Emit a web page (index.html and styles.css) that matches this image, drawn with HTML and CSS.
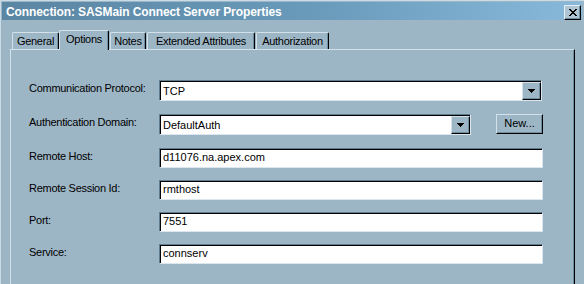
FILE: index.html
```html
<!DOCTYPE html>
<html lang="en">
  <head>
    <meta charset="UTF-8" />
    <title>Connection: SASMain Connect Server Properties</title>
    <link rel="stylesheet" href="styles.css">
  </head>
  <body>
    <div class="window">
      <div class="titlebar">
        <span class="title">Connection: SASMain Connect Server Properties</span>
        <div class="close">
          <svg width="8" height="7" viewBox="0 0 8 7" shape-rendering="crispEdges">
            <path d="M0 0h2v1h1v1h2v-1h1v-1h2v1h-1v1h-1v1h-1v1h1v1h1v1h1v1h-2v-1h-1v-1h-2v1h-1v1h-2v-1h1v-1h1v-1h1v-1h-1v-1h-1v-1h-1z" fill="#000"/>
          </svg>
        </div>
      </div>

      <div class="tabs">
        <div class="tab general">General</div>
        <div class="tab options active">Options</div>
        <div class="tab notes">Notes</div>
        <div class="tab extended">Extended Attributes</div>
        <div class="tab authorization">Authorization</div>
      </div>

      <div class="panel">
        <div class="form">
          <div class="label">Communication Protocol:</div>
          <div class="combo wide">
            <span class="value">TCP</span>
            <span class="drop"><svg width="7" height="4" viewBox="0 0 7 4" shape-rendering="crispEdges"><path d="M0 0h7v1h-1v1h-1v1h-1v1h-1v-1h-1v-1h-1v-1h-1z" fill="#000"/></svg></span>
          </div>

          <div class="label">Authentication Domain:</div>
          <div class="combo-row">
            <div class="combo short">
              <span class="value">DefaultAuth</span>
              <span class="drop"><svg width="7" height="4" viewBox="0 0 7 4" shape-rendering="crispEdges"><path d="M0 0h7v1h-1v1h-1v1h-1v1h-1v-1h-1v-1h-1v-1h-1z" fill="#000"/></svg></span>
            </div>
            <div class="button">New...</div>
          </div>

          <div class="label">Remote Host:</div>
          <div class="field">d11076.na.apex.com</div>

          <div class="label">Remote Session Id:</div>
          <div class="field">rmthost</div>

          <div class="label">Port:</div>
          <div class="field">7551</div>

          <div class="label">Service:</div>
          <div class="field">connserv</div>
        </div>
      </div>
    </div>
  </body>
</html>
```

FILE: styles.css
```css
* {
  box-sizing: border-box;
}
body {
  margin: 0;
  background: #9db6c6;
  font-family: "Liberation Sans", Arial, sans-serif;
  font-size: 11px;
  color: #000;
}
.window {
  width: 584px;
  height: 284px;
  overflow: hidden;
  border-top: 1px solid #c9dbe6;
  border-left: 1px solid #c9dbe6;
  padding: 1px 2px 0 1px;
}
.titlebar {
  height: 18px;
  display: flex;
  align-items: flex-start;
  justify-content: space-between;
  background: linear-gradient(to right, #5b86a3, #6a9bbb 55%, #89b9da);
  padding-left: 4px;
}
.title {
  color: #fff;
  font-weight: bold;
  font-size: 12px;
  letter-spacing: -0.1px;
  line-height: 18px;
  padding-top: 1px;
}
.close {
  width: 17px;
  height: 15px;
  margin-top: 3px;
  margin-right: 1px;
  background: #aec5d3;
  border-top: 1px solid #e4eef4;
  border-left: 1px solid #e4eef4;
  border-right: 1px solid #000;
  border-bottom: 1px solid #000;
  box-shadow: inset -1px -1px 0 #6f8ea1;
  display: flex;
  align-items: center;
  justify-content: center;
}
.close svg {
  display: block;
}
.tabs {
  display: flex;
  align-items: flex-end;
  height: 19px;
  margin-top: 10px;
  padding-left: 10px;
}
.tab {
  height: 17px;
  line-height: 16px;
  text-align: center;
  letter-spacing: -0.28px;
  border-top: 1px solid #d2e1ea;
  border-left: 1px solid #d2e1ea;
  border-right: 1px solid #000;
  border-top-left-radius: 2px;
  border-top-right-radius: 2px;
  box-shadow: inset -1px 0 0 #6f8ea1;
  white-space: nowrap;
}
.tab.active {
  height: 20px;
  line-height: 17px;
  margin-bottom: -1px;
  background: #9db6c6;
  position: relative;
  z-index: 1;
}
.general { width: 47px; }
.options { width: 50px; }
.notes { width: 36px; margin-left: 1px; }
.extended { width: 108px; margin-left: 1px; }
.authorization { width: 73px; margin-left: 1px; }
.panel {
  width: 565px;
  height: 240px;
  margin-left: 8px;
  border-top: 1px solid #d2e1ea;
  border-left: 1px solid #d2e1ea;
  border-right: 1px solid #000;
  box-shadow: inset -1px 0 0 #6f8ea1;
  padding: 30px 0 0 18px;
}
.form {
  display: grid;
  grid-template-columns: 130px auto;
  grid-template-rows: 34px 34px 32px 32px 32px 32px;
  align-items: start;
}
.label {
  line-height: 14px;
  padding-top: 1px;
  letter-spacing: -0.28px;
  white-space: nowrap;
}
.combo,
.field {
  background: #fff;
  border-top: 1px solid #5e7c90;
  border-left: 1px solid #5e7c90;
  border-bottom: 1px solid #dae7ef;
  border-right: 1px solid #dae7ef;
  box-shadow: inset 1px 1px 0 #000;
}
.combo {
  height: 21px;
  display: flex;
  padding: 1px 0 0 1px;
}
.combo.wide {
  width: 383px;
}
.combo.short {
  width: 312px;
}
.value {
  flex: 1;
  padding: 1px 0 0 2px;
  line-height: 17px;
}
.drop {
  width: 19px;
  height: 18px;
  background: #9db6c6;
  border-top: 1px solid #d2e1ea;
  border-left: 1px solid #d2e1ea;
  border-right: 1px solid #000;
  border-bottom: 1px solid #000;
  box-shadow: inset -1px -1px 0 #6f8ea1;
  display: flex;
  align-items: center;
  justify-content: center;
}
.drop svg {
  display: block;
}
.combo-row {
  display: flex;
  align-items: flex-start;
}
.button {
  width: 47px;
  height: 20px;
  margin-left: 25px;
  background: #9db6c6;
  border-top: 1px solid #d2e1ea;
  border-left: 1px solid #d2e1ea;
  border-right: 1px solid #000;
  border-bottom: 1px solid #000;
  box-shadow: inset -1px -1px 0 #6f8ea1;
  text-align: center;
  line-height: 17px;
}
.field {
  width: 384px;
  height: 20px;
  padding-left: 3px;
  line-height: 17px;
}
```
